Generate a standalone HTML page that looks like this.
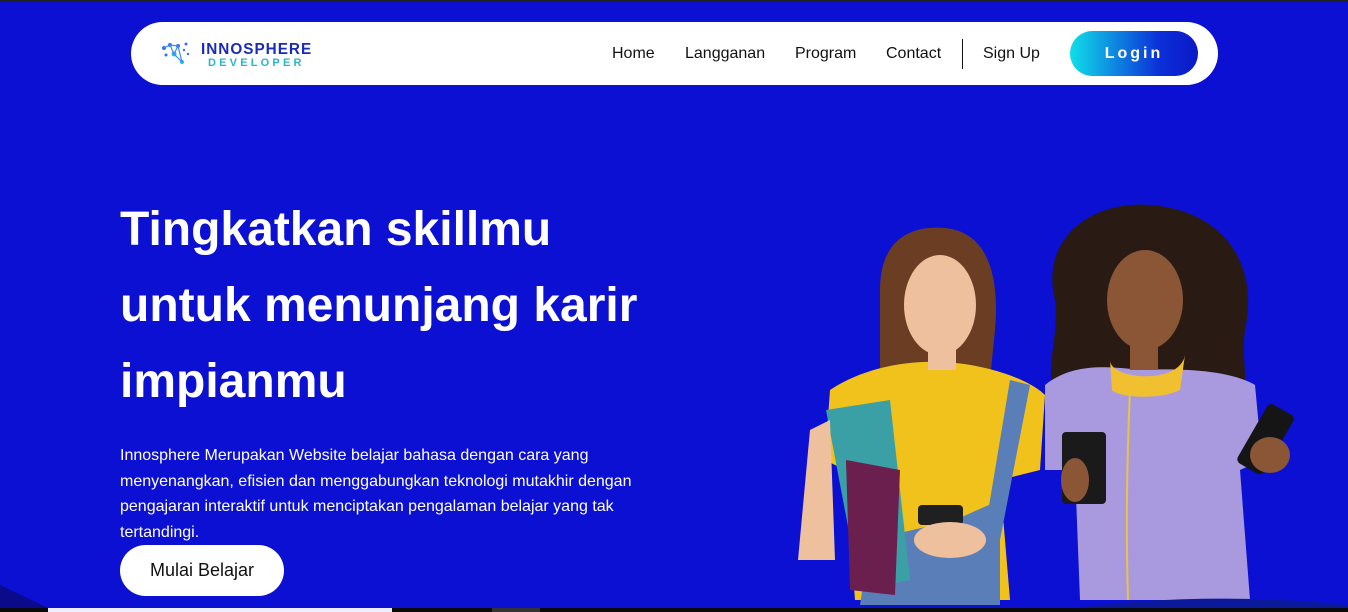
<!DOCTYPE html>
<html><head><meta charset="utf-8"><style>
*{margin:0;padding:0;box-sizing:border-box}
body{width:1348px;height:612px;overflow:hidden;background:#0b10d2;font-family:"Liberation Sans",sans-serif;position:relative}
.topline{position:absolute;left:0;top:0;width:1348px;height:2px;background:#222}
.nav{position:absolute;left:131px;top:22px;width:1087px;height:63px;background:#fff;border-radius:32px}
.logo{position:absolute;left:29px;top:18px}
.lt1{position:absolute;left:70px;top:19px;font-size:15.3px;font-weight:bold;color:#1a2bb8;letter-spacing:1px}
.lt2{position:absolute;left:77px;top:35px;font-size:11px;font-weight:bold;color:#2bb6c4;letter-spacing:3.2px}
.links a{position:absolute;top:23px;font-size:16px;color:#111;text-decoration:none}
.sep{position:absolute;left:831px;top:17px;width:1px;height:30px;background:#111}
.login{position:absolute;left:939px;top:9px;width:128px;height:45px;border-radius:23px;background:linear-gradient(90deg,#10dfe8,#0b2fd8 70%,#0b18c8);color:#fff;font-weight:bold;font-size:16px;letter-spacing:3px;text-align:center;line-height:45px}
h1{position:absolute;left:120px;top:192px;color:#fff;font-size:48px;font-weight:bold;line-height:76px;width:540px}
p{position:absolute;left:120px;top:443px;color:#fff;font-size:16px;line-height:25.5px;width:540px}
.btn{position:absolute;left:120px;top:545px;width:164px;height:51px;border-radius:26px;background:#fff;color:#111;font-size:18px;text-align:center;line-height:51px}
.bottom{position:absolute;left:0;top:608px;width:1348px;height:4px;background:#0a0a0a}
</style></head><body>
<div class="topline"></div>
<div class="nav">
<svg class="logo" width="32" height="28" viewBox="0 0 32 28">
<g fill="#3a6df0"><circle cx="4" cy="8" r="2"/><circle cx="10" cy="5" r="2"/><circle cx="18" cy="6" r="2"/><circle cx="26" cy="4" r="1.5"/><circle cx="6" cy="15" r="1.5"/><circle cx="14" cy="14" r="2.5" fill="#28b8e6"/><circle cx="22" cy="22" r="2" fill="#28b8e6"/><circle cx="28" cy="14" r="1.2"/><circle cx="24" cy="10" r="1.2"/></g>
<path d="M4 8L10 5L18 6L14 14L22 22M18 6L22 22M10 5L14 14" stroke="#3a8df0" stroke-width="1.2" fill="none"/></svg>
<div class="lt1">INNOSPHERE</div>
<div class="lt2">DEVELOPER</div>
<div class="links"><a style="left:481px">Home</a><a style="left:554px">Langganan</a><a style="left:664px">Program</a><a style="left:755px">Contact</a><a style="left:852px">Sign Up</a></div>
<div class="sep"></div>
<div class="login">Login</div>
</div>
<h1>Tingkatkan skillmu untuk menunjang karir impianmu</h1>
<p>Innosphere Merupakan Website belajar bahasa dengan cara yang menyenangkan, efisien dan menggabungkan teknologi mutakhir dengan pengajaran interaktif untuk menciptakan pengalaman belajar yang tak tertandingi.</p>
<div class="btn">Mulai Belajar</div>
<svg style="position:absolute;left:0;top:0" width="1348" height="612">
<path d="M0 585L48 608H0Z" fill="#0a0a8a"/>
<path d="M1055 300C1040 240 1090 200 1150 205C1220 210 1260 260 1245 330C1240 370 1255 390 1230 400L1060 400C1040 380 1060 340 1055 300Z" fill="#2a1a14"/>
<path d="M1045 385C1070 365 1100 365 1140 370C1180 368 1230 370 1255 385L1262 460L1240 470L1250 600H1080L1075 470L1045 470Z" fill="#a99ae0"/>
<ellipse cx="1145" cy="300" rx="38" ry="50" fill="#8a5636"/>
<rect x="1130" y="340" width="28" height="30" fill="#8a5636"/>
<path d="M1110 360C1110 380 1180 385 1185 355L1180 390C1160 400 1120 398 1112 390Z" fill="#f0c030"/>
<path d="M1130 390Q1125 500 1128 600" stroke="#e8c440" stroke-width="2" fill="none"/>
<rect x="1062" y="432" width="44" height="72" rx="4" fill="#1a1a1a"/>
<ellipse cx="1075" cy="480" rx="14" ry="22" fill="#8a5636"/>
<rect x="1250" y="405" width="30" height="68" rx="5" transform="rotate(30 1265 440)" fill="#151515"/>
<ellipse cx="1270" cy="455" rx="20" ry="18" fill="#8a5636"/>
<path d="M880 290C880 240 910 225 945 228C985 232 1000 270 995 330L990 380L880 400Z" fill="#6b3e24"/>
<path d="M830 390C860 370 900 360 945 362C990 365 1030 380 1045 395L1040 470L1000 480L1010 600H855L845 470L825 460Z" fill="#f2c21c"/>
<ellipse cx="940" cy="305" rx="36" ry="50" fill="#efc09e"/>
<rect x="928" y="345" width="28" height="25" fill="#efc09e"/>
<path d="M955 520L1000 500L1000 605H860L870 540Z" fill="#5a7fb8"/>
<path d="M1010 380L1030 385L1000 540L985 530Z" fill="#5a7fb8"/>
<path d="M826 410L890 400L910 580L860 590Z" fill="#3aa0a6"/>
<path d="M846 460L900 470L895 595L850 590Z" fill="#6a1f4e"/>
<path d="M810 430L830 420L835 560L798 560Z" fill="#efc09e"/>
<rect x="918" y="505" width="45" height="20" rx="4" fill="#202020"/>
<ellipse cx="950" cy="540" rx="36" ry="18" fill="#efc09e"/>
<path d="M1060 610Q1200 590 1348 605V612H1060Z" fill="#0a1a9a"/>
</svg>
<div class="bottom"></div>
<div style="position:absolute;left:48px;top:608px;width:344px;height:4px;background:#eef"></div>
<div style="position:absolute;left:492px;top:608px;width:48px;height:4px;background:#333"></div>
</body></html>
